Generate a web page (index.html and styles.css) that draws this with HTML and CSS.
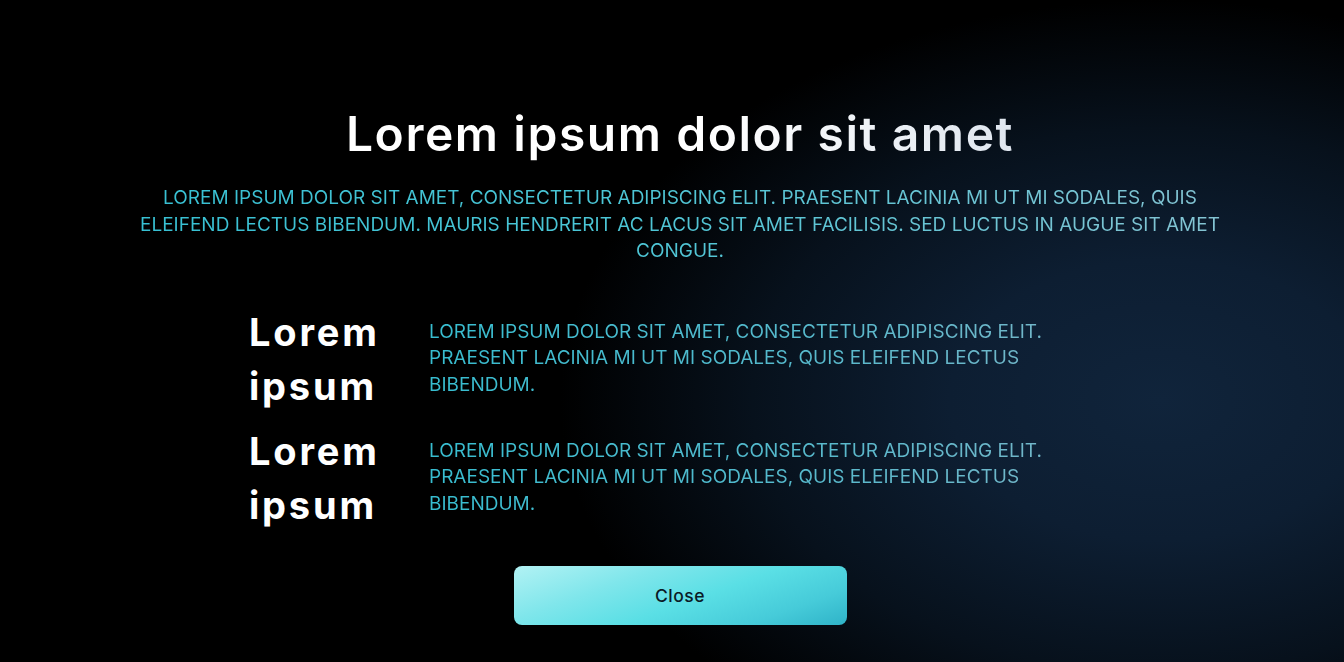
FILE: index.html
```html
<!DOCTYPE html>
<html lang="en">
<head>
<meta charset="utf-8">
<title>Lorem ipsum</title>
<link rel="stylesheet" href="styles.css">
</head>
<body>
<main class="modal">
  <h1 class="title">Lorem ipsum dolor sit amet</h1>
  <p class="lead">Lorem ipsum dolor sit amet, consectetur adipiscing elit. Praesent lacinia mi ut mi sodales, quis eleifend lectus bibendum. Mauris hendrerit ac lacus sit amet facilisis. Sed luctus in augue sit amet congue.</p>
  <section class="rows">
    <div class="row">
      <h2 class="row-label">Lorem ipsum</h2>
      <p class="row-text">Lorem ipsum dolor sit amet, consectetur adipiscing elit. Praesent lacinia mi ut mi sodales, quis eleifend lectus bibendum.</p>
    </div>
    <div class="row">
      <h2 class="row-label">Lorem ipsum</h2>
      <p class="row-text">Lorem ipsum dolor sit amet, consectetur adipiscing elit. Praesent lacinia mi ut mi sodales, quis eleifend lectus bibendum.</p>
    </div>
  </section>
  <button class="close-btn" type="button">Close</button>
</main>
</body>
</html>
```

FILE: styles.css
```css
* { box-sizing: border-box; }
html, body { height: 100%; }
body {
  margin: 0;
  padding-left: 16px;
  font-family: Inter, "Noto Sans", sans-serif;
  color: #fff;
  background-color: #000;
  background-image: radial-gradient(ellipse 600px 400px at 1160px 400px, #10243b 0%, #0d1e32 35%, #07111c 68%, #000 100%);
  overflow: hidden;
}
.modal {
  width: 1088px;
  margin: 0 auto;
  padding-top: 98px;
  display: flex;
  flex-direction: column;
  align-items: center;
}
.title {
  margin: 0;
  font-size: 48px;
  line-height: 72px;
  font-weight: 600;
  letter-spacing: 1.55px;
  background: linear-gradient(90deg, #ffffff 0%, #ffffff 55%, #dfe6ef 100%);
  -webkit-background-clip: text;
  background-clip: text;
  color: transparent;
}
.lead {
  margin: 15px 0 0;
  text-align: center;
  text-transform: uppercase;
  font-size: 19px;
  line-height: 26.5px;
  font-weight: 400;
  background: linear-gradient(90deg, #37c0d3 0%, #4cc6d6 45%, #85c4d3 100%);
  -webkit-background-clip: text;
  background-clip: text;
  color: transparent;
}
.rows {
  width: 862px;
  margin-top: 40px;
  display: flex;
  flex-direction: column;
  gap: 11px;
}
.row {
  display: grid;
  grid-template-columns: 180px 1fr;
  align-items: center;
}
.row-label {
  margin: 0;
  width: 150px;
  font-size: 38px;
  line-height: 54px;
  font-weight: 700;
  letter-spacing: 2.8px;
  color: #fff;
}
.row-text {
  margin: 0;
  text-transform: uppercase;
  font-size: 19px;
  line-height: 26.5px;
  background: linear-gradient(90deg, #37bdd0 0%, #5ab9cc 60%, #7ab6c8 100%);
  -webkit-background-clip: text;
  background-clip: text;
  color: transparent;
}
.close-btn {
  margin-top: 34px;
  width: 333px;
  height: 59px;
  border: 0;
  border-radius: 8px;
  font-family: inherit;
  font-size: 17.5px;
  font-weight: 500;
  letter-spacing: 0.5px;
  color: #0a1a26;
  background: linear-gradient(160deg, #b2f2f4 0%, #7fe6eb 30%, #5adfe5 55%, #46cbd9 80%, #2fb3c8 100%);
  cursor: pointer;
}
```
